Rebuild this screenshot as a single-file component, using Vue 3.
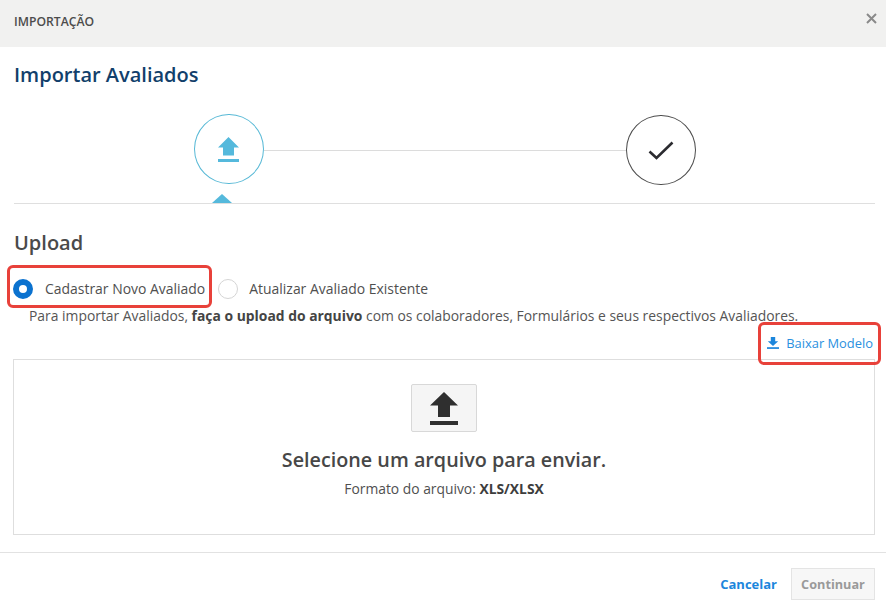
<script setup>
</script>

<template>
  <div class="page">
    <header class="head">
      <span class="head-title">IMPORTAÇÃO</span>
      <svg class="close" width="11" height="11" viewBox="0 0 11 11"><path d="M1 1l9 9M10 1l-9 9" stroke="#8a8a8a" stroke-width="2" fill="none"/></svg>
    </header>

    <h1 class="title">Importar Avaliados</h1>

    <div class="stepper">
      <div class="step step-on">
        <svg width="21" height="25" viewBox="0 0 21 25"><path d="M10.5 0L21 10.5H16V18.5H5V10.5H0Z" fill="#55b9dc"/><rect y="22" width="21" height="3" fill="#55b9dc"/></svg>
        <span class="pointer"></span>
      </div>
      <div class="link"></div>
      <div class="step step-off">
        <svg class="tick" width="26" height="20" viewBox="0 0 26 20"><path d="M1.5 10.5L8.5 17L24.5 1.5" stroke="#2b2b30" stroke-width="2.6" fill="none"/></svg>
      </div>
    </div>

    <section class="body">
      <h2 class="upload">Upload</h2>

      <div class="radios">
        <label class="radio">
          <span class="dot dot-on"></span>
          <span>Cadastrar Novo Avaliado</span>
          <span class="mark mark-radio"></span>
        </label>
        <label class="radio radio-b">
          <span class="dot"></span>
          <span>Atualizar Avaliado Existente</span>
        </label>
      </div>

      <p class="intro">Para importar Avaliados, <b>faça o upload do arquivo</b> com os colaboradores, Formulários e seus respectivos Avaliadores.</p>

      <div class="model-row">
        <a class="model">
          <svg width="12" height="12" viewBox="0 0 12 12"><path d="M3.8 0H8.2V4.2H11.2L6 9L0.8 4.2H3.8Z" fill="#1c86dc"/><rect y="10.2" width="12" height="1.7" fill="#1c86dc"/></svg>
          <span>Baixar Modelo</span>
          <span class="mark mark-model"></span>
        </a>
      </div>

      <div class="drop">
        <button class="drop-btn">
          <svg width="28" height="33" viewBox="0 0 28 33"><path d="M14 0L28 13.5H20V25H8V13.5H0Z" fill="#2f2f2f"/><rect y="29" width="28" height="4" fill="#2f2f2f"/></svg>
        </button>
        <div class="drop-title">Selecione um arquivo para enviar.</div>
        <div class="drop-sub">Formato do arquivo: <b>XLS/XLSX</b></div>
      </div>
    </section>

    <footer class="foot">
      <a class="cancel">Cancelar</a>
      <button class="go">Continuar</button>
    </footer>
  </div>
</template>

<style scoped>
.page {
  width: 886px;
  height: 609px;
  background: #fff;
  font-family: "Open Sans", sans-serif;
  color: #4a4a4a;
  overflow: hidden;
}
.head {
  height: 47px;
  background: #f1f1f0;
  display: flex;
  align-items: center;
  justify-content: space-between;
  padding: 0 9px 0 14px;
  box-sizing: border-box;
}
.head-title {
  font-size: 12.2px;
  font-weight: 600;
  color: #4c4c4c;
  margin-top: -5px;
}
.close { margin-top: -11px; }
.title {
  margin: 15px 0 0 14px;
  font-size: 20px;
  line-height: 26px;
  font-weight: 600;
  color: #123f6b;
}
.stepper {
  display: flex;
  align-items: flex-start;
  margin: 26px 0 0 194px;
  width: 501.5px;
}
.step {
  width: 69.5px;
  height: 70px;
  box-sizing: border-box;
  border-radius: 50%;
  display: flex;
  align-items: center;
  justify-content: center;
  position: relative;
  flex: none;
}
.step-on { border: 1px solid #58b9d6; }
.step-off {
  border: 1px solid #4d4d4d;
  margin-top: 1px;
}
.tick { margin-top: 2px; }
.link {
  flex: 1;
  height: 1px;
  margin-top: 36px;
  background: #dcdcdc;
}
.pointer {
  position: absolute;
  left: 17px;
  top: 79px;
  width: 0;
  height: 0;
  border-left: 10px solid transparent;
  border-right: 10px solid transparent;
  border-bottom: 9px solid #55b9dc;
}
.body {
  margin: 18px 11px 0 14px;
  border-top: 1px solid #dfdfdf;
}
.upload {
  margin: 26px 0 0;
  font-size: 20px;
  line-height: 26px;
  font-weight: 600;
  color: #4a4a4a;
}
.radios {
  display: flex;
  margin: 23px 0 0 -1px;
  font-size: 13.95px;
  line-height: 20px;
  color: #4f4f4f;
}
.radio {
  position: relative;
  display: flex;
  align-items: center;
  gap: 12px;
}
.radio-b {
  margin-left: 13px;
  gap: 11px;
}
.dot {
  width: 20px;
  height: 20px;
  box-sizing: border-box;
  border-radius: 50%;
  border: 1px solid #d5d5d5;
  background: #fff;
  flex: none;
}
.dot-on {
  border: 6.5px solid #0b72cf;
}
.mark {
  position: absolute;
  border: 3px solid #e8413a;
  border-radius: 6px;
  pointer-events: none;
  box-sizing: border-box;
}
.mark-radio {
  left: -6px;
  top: -14px;
  width: 205px;
  height: 43px;
}
.intro {
  margin: 7px 0 0 15px;
  font-size: 13.88px;
  line-height: 20px;
  color: #555;
  white-space: nowrap;
}
.intro b { font-weight: 700; color: #444; }
.model-row {
  display: flex;
  justify-content: flex-end;
  margin-top: 7px;
  height: 20px;
}
.model {
  position: relative;
  display: flex;
  align-items: center;
  gap: 7px;
  font-size: 12.9px;
  line-height: 20px;
  color: #2a90e0;
  margin-right: 2px;
}
.mark-model {
  left: -9px;
  top: -11px;
  width: 123px;
  height: 43px;
}
.drop {
  margin: 6px 0 0 -1px;
  height: 176px;
  box-sizing: border-box;
  border: 1px solid #dedede;
  display: flex;
  flex-direction: column;
  align-items: center;
  padding-top: 24px;
}
.drop-btn {
  width: 66px;
  height: 48px;
  padding: 0;
  box-sizing: border-box;
  background: #f5f5f5;
  border: 1px solid #d8d8d8;
  border-radius: 2px;
  display: flex;
  align-items: center;
  justify-content: center;
}
.drop-title {
  margin-top: 13px;
  font-size: 19.75px;
  line-height: 30px;
  font-weight: 600;
  color: #474747;
}
.drop-sub {
  margin-top: 5px;
  font-size: 13.85px;
  line-height: 18px;
  color: #4f4f4f;
}
.drop-sub b { font-weight: 700; color: #3d3d3d; }
.foot {
  margin-top: 17px;
  border-top: 1px solid #e2e2e2;
  display: flex;
  align-items: center;
  justify-content: flex-end;
  padding: 15px 11px 0 0;
  gap: 14px;
}
.cancel {
  font-size: 13px;
  font-weight: 700;
  color: #1c86dc;
}
.go {
  width: 84px;
  height: 32px;
  box-sizing: border-box;
  background: #f7f7f7;
  border: 1px solid #e4e4e4;
  font-family: "Open Sans", sans-serif;
  font-size: 12.7px;
  font-weight: 700;
  color: #9a9a9a;
  padding: 0;
}
</style>
